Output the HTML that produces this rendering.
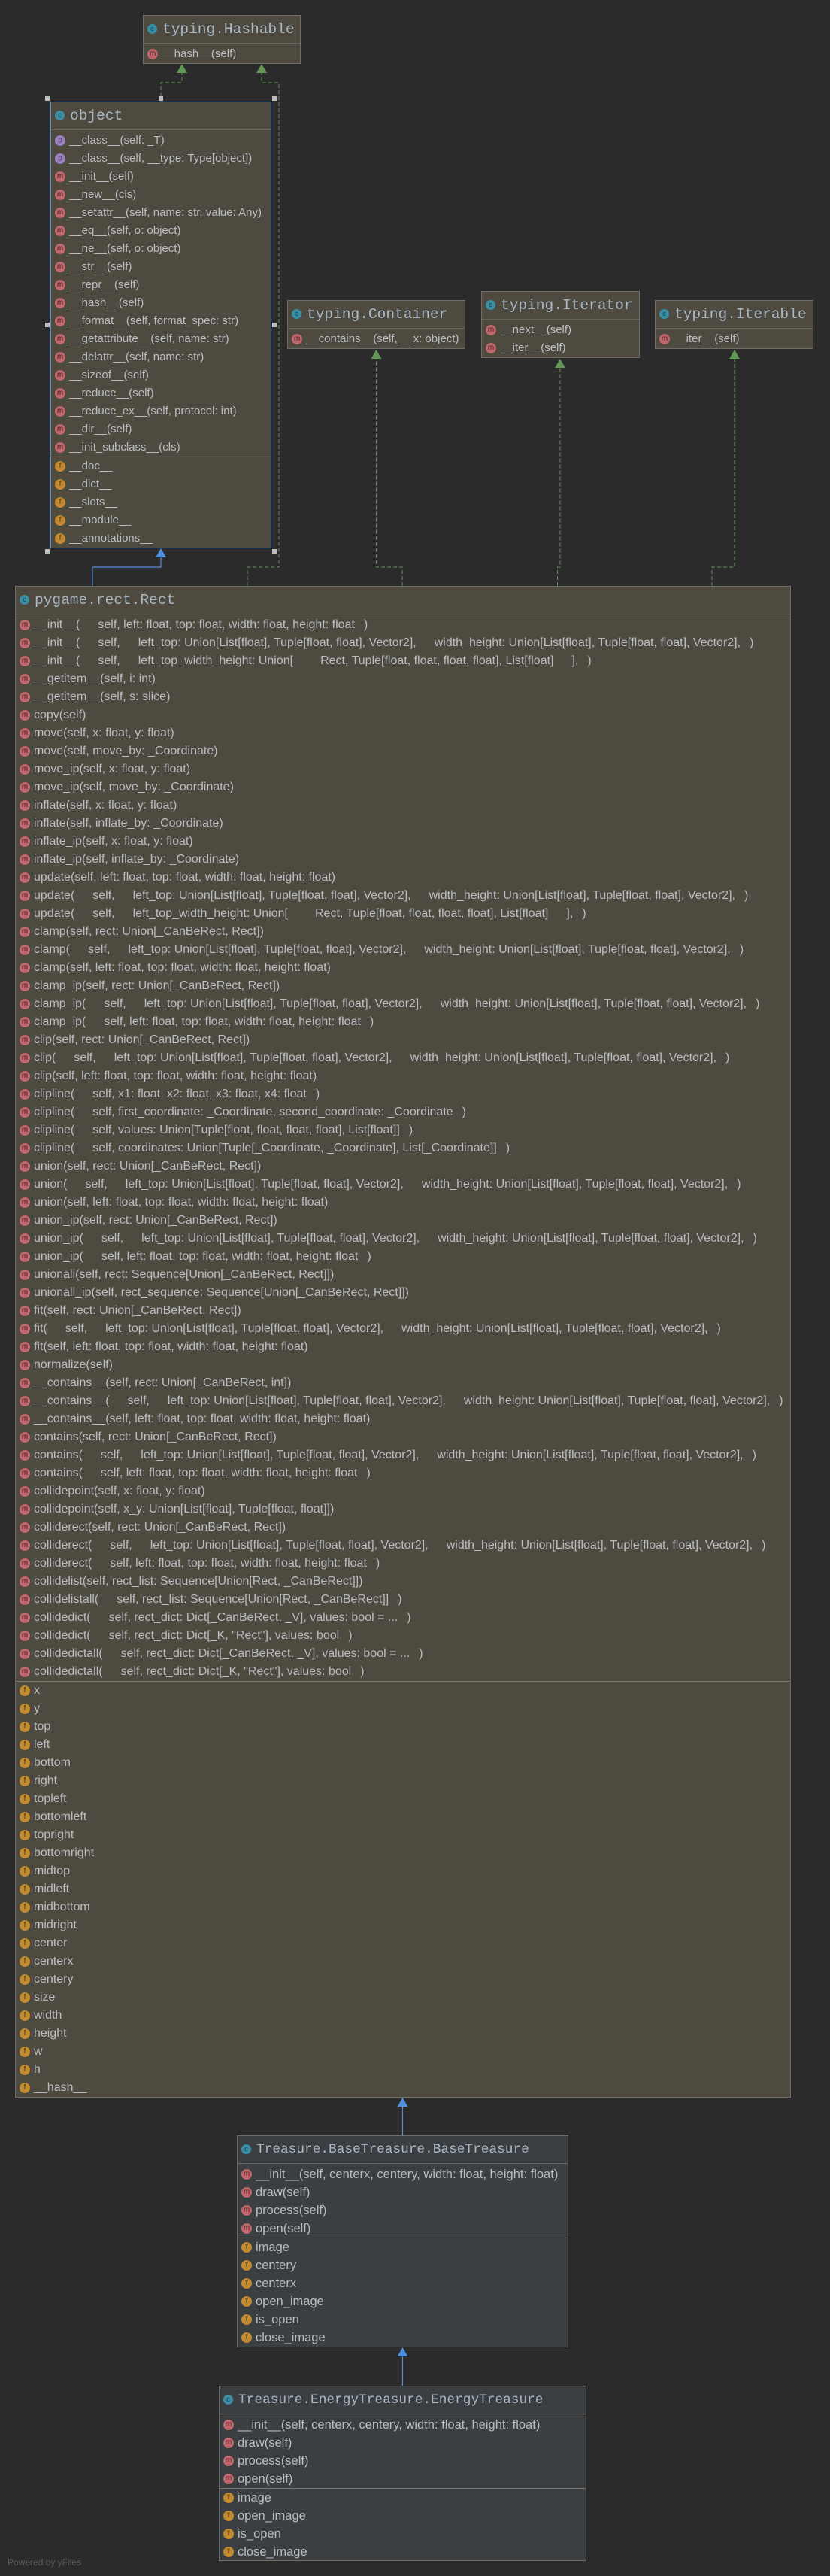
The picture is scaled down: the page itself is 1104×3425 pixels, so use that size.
<!DOCTYPE html>
<html><head><meta charset="utf-8">
<style>
html,body{margin:0;padding:0;background:#2b2b2b;}
body{width:1104px;height:3425px;position:relative;overflow:hidden;font-family:"Liberation Sans",sans-serif;}
.box{position:absolute;background:#4e4a3f;border:1px solid #6d6c66;box-sizing:border-box;overflow:hidden;}
.box.t{background:#3c3f41;}
.box.sel{border:1px solid #4f8fdc;}
.hd{height:36px;border-bottom:1px solid #67665f;position:relative;white-space:pre;font-family:"Liberation Mono",monospace;font-size:19.5px;color:#a9b7c6;line-height:36px;padding-left:25px;}
.hd .c{position:absolute;left:5px;top:11px;width:13px;height:13px;border-radius:50%;background:#3a8ea6;color:#1d3a44;font:9px/13px "Liberation Sans",sans-serif;text-align:center;}
.t .hd{font-size:17.8px;}
.bd{padding-top:2px;}
.sep{border-top:1px solid #77766f;}
.r{height:24px;line-height:24px;white-space:pre;font-size:16px;color:#b9bdc2;padding-left:24px;position:relative;}
.sm .r{font-size:15px;}
.t .r{font-size:16.5px;}
.r b{position:absolute;left:5px;top:5px;width:14px;height:14px;border-radius:50%;font:normal 10px/13px "Liberation Sans",sans-serif;text-align:center;}
.r b.m{background:#c0676e;color:#4b2326;}
.r b.f{background:#c28a2e;color:#4a3310;}
.r b.p{background:#9a7fc0;color:#3a2a55;}
i{display:inline-block;width:24px;}
i.s{width:12px;}
i.l{width:36px;}
.h{position:absolute;width:6px;height:6px;background:#bdbdbd;}
.pw{position:absolute;left:10px;top:3400px;font-size:12px;color:#5a5a5a;}
</style></head><body>

<svg width="1104" height="3425" style="position:absolute;left:0;top:0">
<g fill="none" stroke="#629755" stroke-width="1" stroke-dasharray="5,3">
<path d="M214 136 V110 H242 V96"/>
<path d="M329 779 V754 H371 V110 H348 V96"/>
<path d="M535 779 V754 H500.5 V476"/>
<path d="M741.5 779 V754 H745 V488"/>
<path d="M947 779 V754 H977 V476"/>
</g>
<g fill="#629755">
<polygon points="242,85 235,97 249,97"/>
<polygon points="348,85 341,97 355,97"/>
<polygon points="500.5,465 493.5,477 507.5,477"/>
<polygon points="745,477 738,489 752,489"/>
<polygon points="977,465 970,477 984,477"/>
</g>
<g fill="none" stroke="#4f8fdc" stroke-width="1.2">
<path d="M123 779 V754 H214 V740"/>
<path d="M535.5 2839 V2800"/>
<path d="M535.5 3172 V3132"/>
</g>
<g fill="#4f8fdc">
<polygon points="214,729 207,741 221,741"/>
<polygon points="535.5,2789 528.5,2801 542.5,2801"/>
<polygon points="535.5,3121 528.5,3133 542.5,3133"/>
</g>
</svg>

<div class="box sm" style="left:190px;top:20px;width:210px;height:65px">
<div class="hd"><span class="c">c</span>typing.Hashable</div>
<div class="bd"><div class="r"><b class="m">m</b>__hash__(self)</div></div>
</div>

<div class="box sel sm" style="left:67px;top:135px;width:294px;height:594px">
<div class="hd"><span class="c">c</span>object</div>
<div class="bd">
<div class="r"><b class="p">p</b>__class__(self: _T)</div>
<div class="r"><b class="p">p</b>__class__(self, __type: Type[object])</div>
<div class="r"><b class="m">m</b>__init__(self)</div>
<div class="r"><b class="m">m</b>__new__(cls)</div>
<div class="r"><b class="m">m</b>__setattr__(self, name: str, value: Any)</div>
<div class="r"><b class="m">m</b>__eq__(self, o: object)</div>
<div class="r"><b class="m">m</b>__ne__(self, o: object)</div>
<div class="r"><b class="m">m</b>__str__(self)</div>
<div class="r"><b class="m">m</b>__repr__(self)</div>
<div class="r"><b class="m">m</b>__hash__(self)</div>
<div class="r"><b class="m">m</b>__format__(self, format_spec: str)</div>
<div class="r"><b class="m">m</b>__getattribute__(self, name: str)</div>
<div class="r"><b class="m">m</b>__delattr__(self, name: str)</div>
<div class="r"><b class="m">m</b>__sizeof__(self)</div>
<div class="r"><b class="m">m</b>__reduce__(self)</div>
<div class="r"><b class="m">m</b>__reduce_ex__(self, protocol: int)</div>
<div class="r"><b class="m">m</b>__dir__(self)</div>
<div class="r"><b class="m">m</b>__init_subclass__(cls)</div>
</div>
<div class="sep">
<div class="r"><b class="f">f</b>__doc__</div>
<div class="r"><b class="f">f</b>__dict__</div>
<div class="r"><b class="f">f</b>__slots__</div>
<div class="r"><b class="f">f</b>__module__</div>
<div class="r"><b class="f">f</b>__annotations__</div>
</div>
</div>
<div class="h" style="left:60px;top:128px"></div>
<div class="h" style="left:211px;top:128px"></div>
<div class="h" style="left:362px;top:128px"></div>
<div class="h" style="left:60px;top:429px"></div>
<div class="h" style="left:362px;top:429px"></div>
<div class="h" style="left:60px;top:730px"></div>
<div class="h" style="left:362px;top:730px"></div>

<div class="box sm" style="left:382px;top:399px;width:237px;height:65px">
<div class="hd"><span class="c">c</span>typing.Container</div>
<div class="bd"><div class="r"><b class="m">m</b>__contains__(self, __x: object)</div></div>
</div>

<div class="box sm" style="left:640px;top:387px;width:211px;height:89px">
<div class="hd"><span class="c">c</span>typing.Iterator</div>
<div class="bd"><div class="r"><b class="m">m</b>__next__(self)</div><div class="r"><b class="m">m</b>__iter__(self)</div></div>
</div>

<div class="box sm" style="left:871px;top:399px;width:211px;height:65px">
<div class="hd"><span class="c">c</span>typing.Iterable</div>
<div class="bd"><div class="r"><b class="m">m</b>__iter__(self)</div></div>
</div>

<div class="box" style="left:20px;top:779px;width:1032px;height:2010px">
<div class="hd"><span class="c">c</span>pygame.rect.Rect</div>
<div class="bd">
<div class="r"><b class="m">m</b>__init__(<i></i>self, left: float, top: float, width: float, height: float<i class="s"></i>)</div>
<div class="r"><b class="m">m</b>__init__(<i></i>self,<i></i>left_top: Union[List[float], Tuple[float, float], Vector2],<i></i>width_height: Union[List[float], Tuple[float, float], Vector2],<i class="s"></i>)</div>
<div class="r"><b class="m">m</b>__init__(<i></i>self,<i></i>left_top_width_height: Union[<i class="l"></i>Rect, Tuple[float, float, float, float], List[float]<i></i>],<i class="s"></i>)</div>
<div class="r"><b class="m">m</b>__getitem__(self, i: int)</div>
<div class="r"><b class="m">m</b>__getitem__(self, s: slice)</div>
<div class="r"><b class="m">m</b>copy(self)</div>
<div class="r"><b class="m">m</b>move(self, x: float, y: float)</div>
<div class="r"><b class="m">m</b>move(self, move_by: _Coordinate)</div>
<div class="r"><b class="m">m</b>move_ip(self, x: float, y: float)</div>
<div class="r"><b class="m">m</b>move_ip(self, move_by: _Coordinate)</div>
<div class="r"><b class="m">m</b>inflate(self, x: float, y: float)</div>
<div class="r"><b class="m">m</b>inflate(self, inflate_by: _Coordinate)</div>
<div class="r"><b class="m">m</b>inflate_ip(self, x: float, y: float)</div>
<div class="r"><b class="m">m</b>inflate_ip(self, inflate_by: _Coordinate)</div>
<div class="r"><b class="m">m</b>update(self, left: float, top: float, width: float, height: float)</div>
<div class="r"><b class="m">m</b>update(<i></i>self,<i></i>left_top: Union[List[float], Tuple[float, float], Vector2],<i></i>width_height: Union[List[float], Tuple[float, float], Vector2],<i class="s"></i>)</div>
<div class="r"><b class="m">m</b>update(<i></i>self,<i></i>left_top_width_height: Union[<i class="l"></i>Rect, Tuple[float, float, float, float], List[float]<i></i>],<i class="s"></i>)</div>
<div class="r"><b class="m">m</b>clamp(self, rect: Union[_CanBeRect, Rect])</div>
<div class="r"><b class="m">m</b>clamp(<i></i>self,<i></i>left_top: Union[List[float], Tuple[float, float], Vector2],<i></i>width_height: Union[List[float], Tuple[float, float], Vector2],<i class="s"></i>)</div>
<div class="r"><b class="m">m</b>clamp(self, left: float, top: float, width: float, height: float)</div>
<div class="r"><b class="m">m</b>clamp_ip(self, rect: Union[_CanBeRect, Rect])</div>
<div class="r"><b class="m">m</b>clamp_ip(<i></i>self,<i></i>left_top: Union[List[float], Tuple[float, float], Vector2],<i></i>width_height: Union[List[float], Tuple[float, float], Vector2],<i class="s"></i>)</div>
<div class="r"><b class="m">m</b>clamp_ip(<i></i>self, left: float, top: float, width: float, height: float<i class="s"></i>)</div>
<div class="r"><b class="m">m</b>clip(self, rect: Union[_CanBeRect, Rect])</div>
<div class="r"><b class="m">m</b>clip(<i></i>self,<i></i>left_top: Union[List[float], Tuple[float, float], Vector2],<i></i>width_height: Union[List[float], Tuple[float, float], Vector2],<i class="s"></i>)</div>
<div class="r"><b class="m">m</b>clip(self, left: float, top: float, width: float, height: float)</div>
<div class="r"><b class="m">m</b>clipline(<i></i>self, x1: float, x2: float, x3: float, x4: float<i class="s"></i>)</div>
<div class="r"><b class="m">m</b>clipline(<i></i>self, first_coordinate: _Coordinate, second_coordinate: _Coordinate<i class="s"></i>)</div>
<div class="r"><b class="m">m</b>clipline(<i></i>self, values: Union[Tuple[float, float, float, float], List[float]]<i class="s"></i>)</div>
<div class="r"><b class="m">m</b>clipline(<i></i>self, coordinates: Union[Tuple[_Coordinate, _Coordinate], List[_Coordinate]]<i class="s"></i>)</div>
<div class="r"><b class="m">m</b>union(self, rect: Union[_CanBeRect, Rect])</div>
<div class="r"><b class="m">m</b>union(<i></i>self,<i></i>left_top: Union[List[float], Tuple[float, float], Vector2],<i></i>width_height: Union[List[float], Tuple[float, float], Vector2],<i class="s"></i>)</div>
<div class="r"><b class="m">m</b>union(self, left: float, top: float, width: float, height: float)</div>
<div class="r"><b class="m">m</b>union_ip(self, rect: Union[_CanBeRect, Rect])</div>
<div class="r"><b class="m">m</b>union_ip(<i></i>self,<i></i>left_top: Union[List[float], Tuple[float, float], Vector2],<i></i>width_height: Union[List[float], Tuple[float, float], Vector2],<i class="s"></i>)</div>
<div class="r"><b class="m">m</b>union_ip(<i></i>self, left: float, top: float, width: float, height: float<i class="s"></i>)</div>
<div class="r"><b class="m">m</b>unionall(self, rect: Sequence[Union[_CanBeRect, Rect]])</div>
<div class="r"><b class="m">m</b>unionall_ip(self, rect_sequence: Sequence[Union[_CanBeRect, Rect]])</div>
<div class="r"><b class="m">m</b>fit(self, rect: Union[_CanBeRect, Rect])</div>
<div class="r"><b class="m">m</b>fit(<i></i>self,<i></i>left_top: Union[List[float], Tuple[float, float], Vector2],<i></i>width_height: Union[List[float], Tuple[float, float], Vector2],<i class="s"></i>)</div>
<div class="r"><b class="m">m</b>fit(self, left: float, top: float, width: float, height: float)</div>
<div class="r"><b class="m">m</b>normalize(self)</div>
<div class="r"><b class="m">m</b>__contains__(self, rect: Union[_CanBeRect, int])</div>
<div class="r"><b class="m">m</b>__contains__(<i></i>self,<i></i>left_top: Union[List[float], Tuple[float, float], Vector2],<i></i>width_height: Union[List[float], Tuple[float, float], Vector2],<i class="s"></i>)</div>
<div class="r"><b class="m">m</b>__contains__(self, left: float, top: float, width: float, height: float)</div>
<div class="r"><b class="m">m</b>contains(self, rect: Union[_CanBeRect, Rect])</div>
<div class="r"><b class="m">m</b>contains(<i></i>self,<i></i>left_top: Union[List[float], Tuple[float, float], Vector2],<i></i>width_height: Union[List[float], Tuple[float, float], Vector2],<i class="s"></i>)</div>
<div class="r"><b class="m">m</b>contains(<i></i>self, left: float, top: float, width: float, height: float<i class="s"></i>)</div>
<div class="r"><b class="m">m</b>collidepoint(self, x: float, y: float)</div>
<div class="r"><b class="m">m</b>collidepoint(self, x_y: Union[List[float], Tuple[float, float]])</div>
<div class="r"><b class="m">m</b>colliderect(self, rect: Union[_CanBeRect, Rect])</div>
<div class="r"><b class="m">m</b>colliderect(<i></i>self,<i></i>left_top: Union[List[float], Tuple[float, float], Vector2],<i></i>width_height: Union[List[float], Tuple[float, float], Vector2],<i class="s"></i>)</div>
<div class="r"><b class="m">m</b>colliderect(<i></i>self, left: float, top: float, width: float, height: float<i class="s"></i>)</div>
<div class="r"><b class="m">m</b>collidelist(self, rect_list: Sequence[Union[Rect, _CanBeRect]])</div>
<div class="r"><b class="m">m</b>collidelistall(<i></i>self, rect_list: Sequence[Union[Rect, _CanBeRect]]<i class="s"></i>)</div>
<div class="r"><b class="m">m</b>collidedict(<i></i>self, rect_dict: Dict[_CanBeRect, _V], values: bool = ...<i class="s"></i>)</div>
<div class="r"><b class="m">m</b>collidedict(<i></i>self, rect_dict: Dict[_K, "Rect"], values: bool<i class="s"></i>)</div>
<div class="r"><b class="m">m</b>collidedictall(<i></i>self, rect_dict: Dict[_CanBeRect, _V], values: bool = ...<i class="s"></i>)</div>
<div class="r"><b class="m">m</b>collidedictall(<i></i>self, rect_dict: Dict[_K, "Rect"], values: bool<i class="s"></i>)</div>
</div>
<div class="sep">
<div class="r"><b class="f">f</b>x</div>
<div class="r"><b class="f">f</b>y</div>
<div class="r"><b class="f">f</b>top</div>
<div class="r"><b class="f">f</b>left</div>
<div class="r"><b class="f">f</b>bottom</div>
<div class="r"><b class="f">f</b>right</div>
<div class="r"><b class="f">f</b>topleft</div>
<div class="r"><b class="f">f</b>bottomleft</div>
<div class="r"><b class="f">f</b>topright</div>
<div class="r"><b class="f">f</b>bottomright</div>
<div class="r"><b class="f">f</b>midtop</div>
<div class="r"><b class="f">f</b>midleft</div>
<div class="r"><b class="f">f</b>midbottom</div>
<div class="r"><b class="f">f</b>midright</div>
<div class="r"><b class="f">f</b>center</div>
<div class="r"><b class="f">f</b>centerx</div>
<div class="r"><b class="f">f</b>centery</div>
<div class="r"><b class="f">f</b>size</div>
<div class="r"><b class="f">f</b>width</div>
<div class="r"><b class="f">f</b>height</div>
<div class="r"><b class="f">f</b>w</div>
<div class="r"><b class="f">f</b>h</div>
<div class="r"><b class="f">f</b>__hash__</div>
</div>
</div>

<div class="box t" style="left:315px;top:2839px;width:441px;height:282px">
<div class="hd"><span class="c">c</span>Treasure.BaseTreasure.BaseTreasure</div>
<div class="bd">
<div class="r"><b class="m">m</b>__init__(self, centerx, centery, width: float, height: float)</div>
<div class="r"><b class="m">m</b>draw(self)</div>
<div class="r"><b class="m">m</b>process(self)</div>
<div class="r"><b class="m">m</b>open(self)</div>
</div>
<div class="sep">
<div class="r"><b class="f">f</b>image</div>
<div class="r"><b class="f">f</b>centery</div>
<div class="r"><b class="f">f</b>centerx</div>
<div class="r"><b class="f">f</b>open_image</div>
<div class="r"><b class="f">f</b>is_open</div>
<div class="r"><b class="f">f</b>close_image</div>
</div>
</div>

<div class="box t" style="left:291px;top:3172px;width:489px;height:233px">
<div class="hd"><span class="c">c</span>Treasure.EnergyTreasure.EnergyTreasure</div>
<div class="bd">
<div class="r"><b class="m">m</b>__init__(self, centerx, centery, width: float, height: float)</div>
<div class="r"><b class="m">m</b>draw(self)</div>
<div class="r"><b class="m">m</b>process(self)</div>
<div class="r"><b class="m">m</b>open(self)</div>
</div>
<div class="sep">
<div class="r"><b class="f">f</b>image</div>
<div class="r"><b class="f">f</b>open_image</div>
<div class="r"><b class="f">f</b>is_open</div>
<div class="r"><b class="f">f</b>close_image</div>
</div>
</div>

<div class="pw">Powered by yFiles</div>
</body></html>
